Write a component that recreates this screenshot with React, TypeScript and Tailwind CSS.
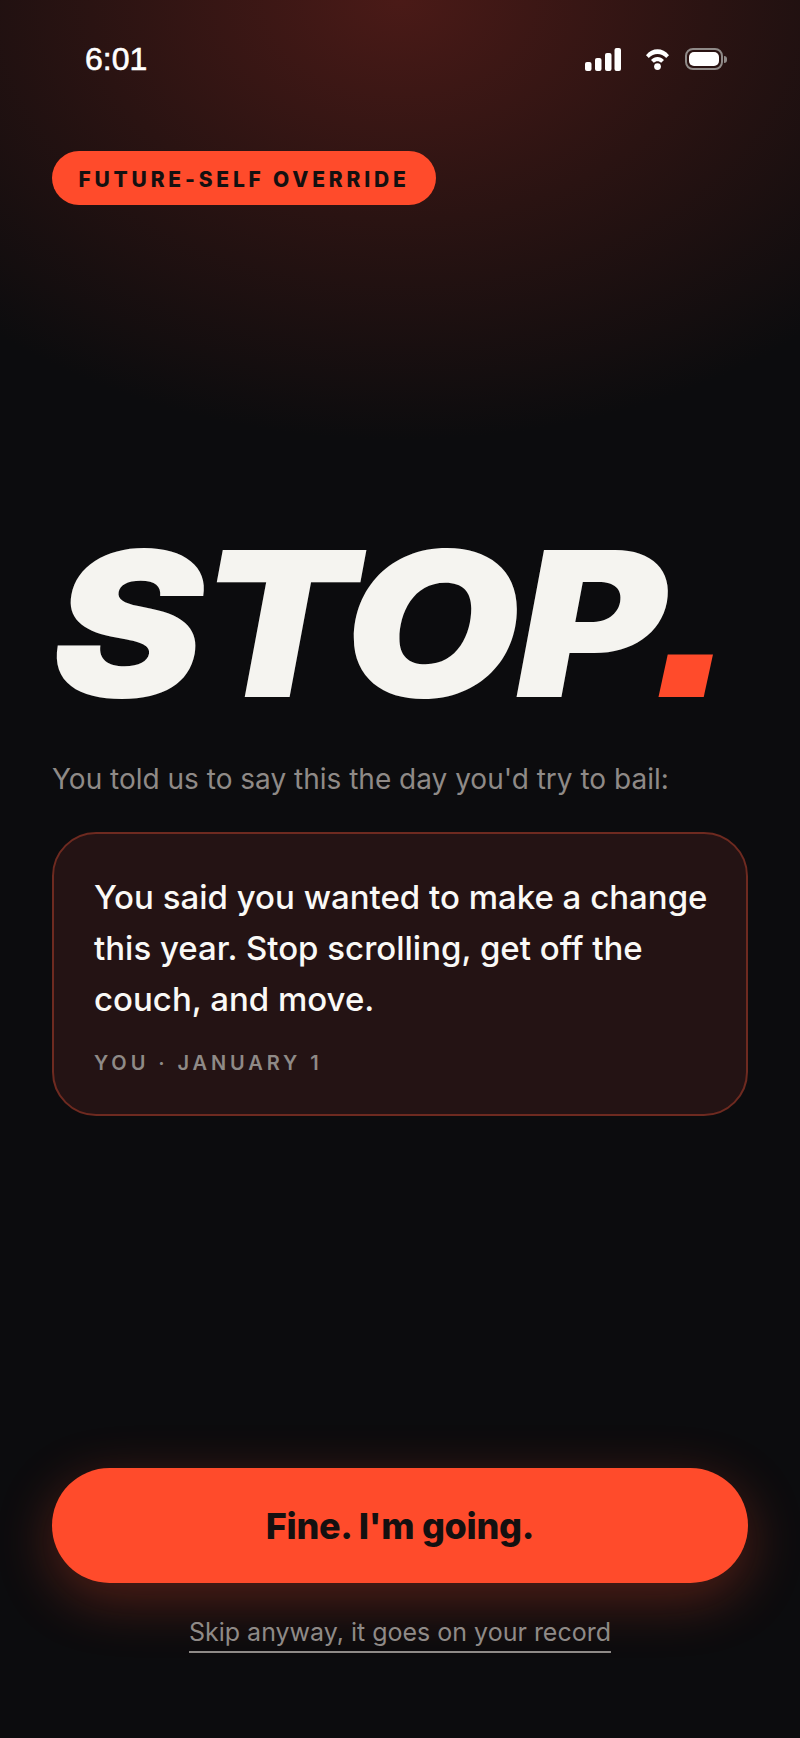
const StatusIcons = () => (
  <div className="flex items-center">
    <svg width="36" height="23" viewBox="0 0 36 23" fill="white">
      <rect x="0" y="14" width="6.5" height="9" rx="2" />
      <rect x="10" y="10" width="6.5" height="13" rx="2" />
      <rect x="20" y="5" width="6.5" height="18" rx="2" />
      <rect x="29.5" y="0" width="6.5" height="23" rx="2" />
    </svg>
    <svg className="ml-[25px]" width="23" height="21" viewBox="0 0 23 21" fill="white">
      <path d="M0 6.2C6.2 -1.6 16.8 -1.6 23 6.2L20.2 9C15.4 3.6 7.6 3.6 2.8 9Z" />
      <path d="M5 11C8.6 6.9 14.4 6.9 18 11L15.2 13.8C13.2 11.6 9.8 11.6 7.8 13.8Z" />
      <circle cx="11.5" cy="17.6" r="3.4" />
    </svg>
    <div className="ml-4 flex items-center">
      <div className="flex h-[22px] w-[38px] items-center justify-center rounded-[8px] border-2 border-[#8f8a88] p-[2px]">
        <div className="h-full w-full rounded-[5px] bg-white" />
      </div>
      <div className="ml-[1px] h-[7px] w-[3px] rounded-r-full bg-[#8f8a88]" />
    </div>
  </div>
);

const App = () => {
  return (
    <div className="flex h-[1738px] w-[800px] flex-col overflow-hidden bg-[#0c0c0e] bg-[radial-gradient(ellipse_620px_440px_at_50%_0%,#4a1a17_0%,#2a1312_50%,#0c0c0e_100%)] font-['Inter',sans-serif] text-[#f5f4f0]">
      <div className="flex items-center justify-between pl-[85px] pr-[73px] pt-[40px]">
        <span className="font-['Liberation_Sans',sans-serif] text-[32px] leading-[38px] text-white [-webkit-text-stroke:0.6px_white]">6:01</span>
        <StatusIcons />
      </div>

      <div className="px-[52px] pt-[73px]">
        <div className="flex h-[54px] w-[384px] items-center justify-center rounded-full bg-[#ff4b2b] pt-[3px] text-[21px] font-extrabold tracking-[3.8px] text-[#141010]">
          FUTURE-SELF OVERRIDE
        </div>

        <h1 className="mt-[317px] mb-[-1px] origin-left scale-x-[1.125] whitespace-nowrap text-[202px] font-black italic leading-[204px] tracking-[-3.5px]">
          STOP<span className="ml-[-9px] font-['Liberation_Sans',sans-serif] text-[285px] font-bold leading-[0] text-[#ff4b2b]">.</span>
        </h1>

        <p className="mt-[34px] text-[28px] leading-[40px] text-[#8f8a87]">
          You told us to say this the day you'd try to bail:
        </p>

        <div className="mt-[33px] rounded-[44px] border-2 border-[#6e2a20] bg-[#241314] pb-[37px] pl-[40px] pr-[30px] pt-[38px]">
          <p className="text-[33px] font-medium leading-[51px] text-[#faf9f6]">
            You said you wanted to make a change this year. Stop scrolling, get off the couch, and move.
          </p>
          <p className="mt-[24px] text-[20px] font-semibold leading-[28px] tracking-[3.9px] text-[#8f8a87]">
            YOU · JANUARY 1
          </p>
        </div>
      </div>

      <div className="mt-auto flex flex-col items-center px-[52px] pb-[85px]">
        <button className="h-[115px] w-full rounded-full bg-[#ff4b2b] text-[36px] font-extrabold tracking-[-0.3px] text-[#141010] shadow-[0_16px_56px_rgba(255,75,43,0.3)]">
          Fine. I'm going.
        </button>
        <span className="mt-[33px] border-b-2 border-[#8f8a87] pb-[3px] text-[25px] leading-[32px] text-[#8f8a87]">
          Skip anyway, it goes on your record
        </span>
      </div>
    </div>
  );
};

export default App;
